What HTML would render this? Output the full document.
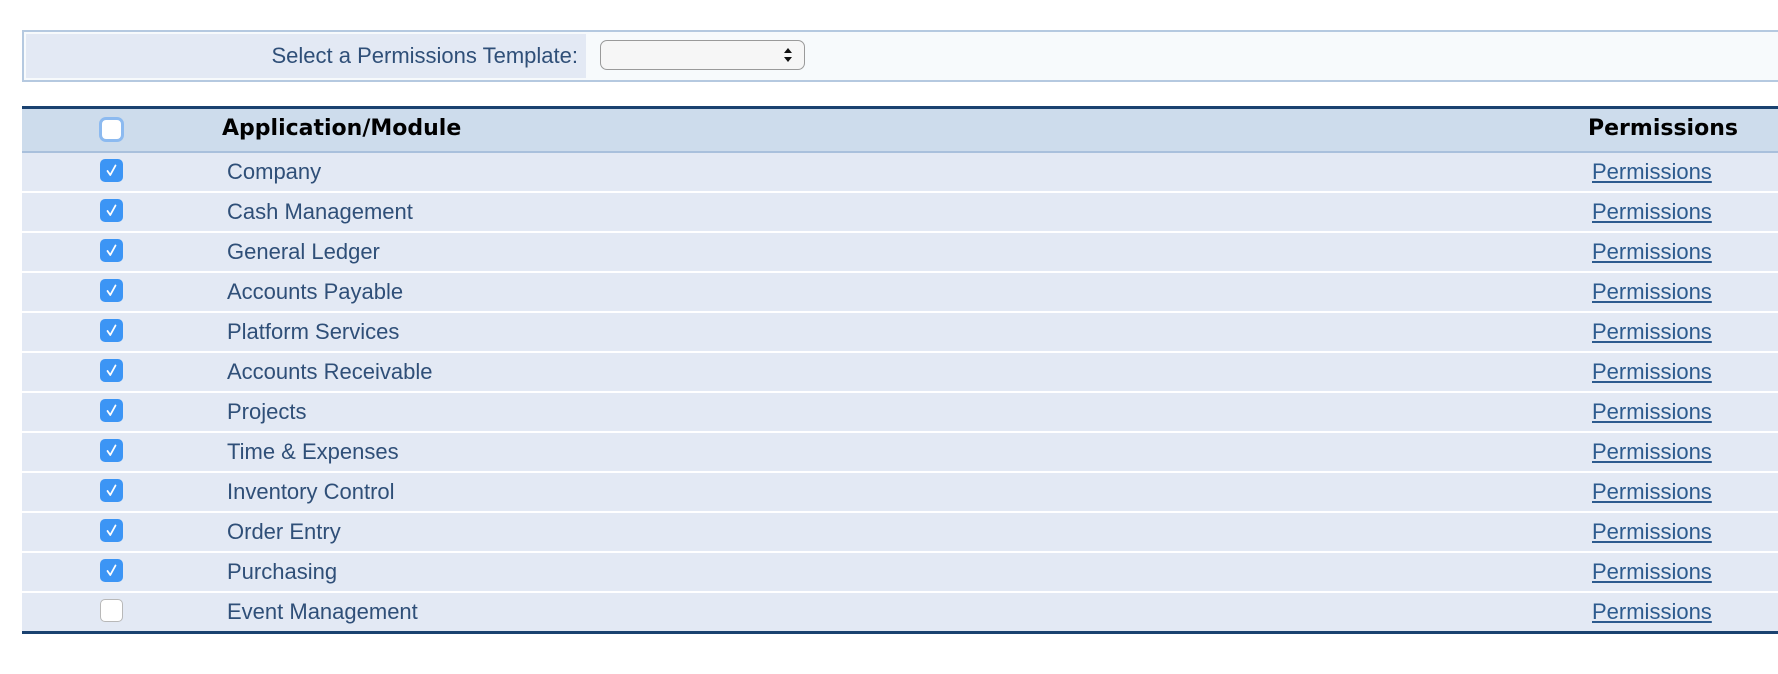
<!DOCTYPE html>
<html><head><meta charset="utf-8"><style>
body{margin:0;background:#fff;width:1778px;height:674px;overflow:hidden;font-family:"Liberation Sans",Helvetica,Arial,sans-serif;}
.top{position:absolute;left:22px;top:30px;width:1770px;height:48px;border:2px solid #b5c9e0;background:#f7fafc;}
.lab{position:absolute;left:2px;top:2px;width:560px;height:44px;background:#e3e9f4;color:#2f4f78;font-size:22px;text-align:right;line-height:44px;padding-right:8px;box-sizing:border-box;}
.sel{position:absolute;left:576px;top:8px;width:205px;height:30px;border:1.5px solid #9a9a9a;border-radius:7px;background:#f6f6f6;box-sizing:border-box;}
.sel:after{content:"";position:absolute;right:12px;top:7px;border:4px solid transparent;border-bottom:5px solid #111;border-top:0;}
.sel:before{content:"";position:absolute;right:12px;top:16px;border:4px solid transparent;border-top:5px solid #111;border-bottom:0;}
.tbl{position:absolute;left:22px;top:106px;width:1770px;border-top:3px solid #1a4270;}
.hdr{height:42px;background:#cddcec;border-bottom:2px solid #a9c0dc;position:relative;font-family:"DejaVu Sans",Verdana,sans-serif;font-weight:bold;font-size:22px;color:#000;}
.row{height:38px;background:#e3e9f4;border-bottom:2px solid #fff;position:relative;color:#2f4f78;font-size:22px;}
.row:last-child{border-bottom:3px solid #1a4270;}
.hdr span,.row span{position:absolute;top:0;line-height:40px;}
.row span{line-height:38px;}
.n{left:205px}.hdr .n{left:200px}
.p{left:1570px}.hdr .p{left:1566px}
.row .p{color:#2c5a8e;text-decoration:underline;}
.cb{position:absolute;left:78px;top:6px;width:23px;height:23px;border-radius:5px;background:#3c95f5;box-sizing:border-box;}
.cb svg{position:absolute;left:4px;top:4px}
.cb.off{background:#fff;border:1px solid #b8b8b8;}
.cb.h{left:77px;top:8px;width:25px;height:25px;background:#fff;border:3px solid #8cbaf0;border-radius:7px;}
</style></head><body>
<div class="top"><div class="lab">Select a Permissions Template:</div><div class="sel"></div></div>
<div class="tbl">
<div class="hdr"><div class="cb h"></div><span class="n">Application/Module</span><span class="p">Permissions</span></div>
<div class="row"><div class="cb"><svg width="15" height="15" viewBox="0 0 15 15"><path d="M3.5 8 L6.3 12 L11.5 2.5" stroke="#fff" stroke-width="1.8" fill="none" stroke-linecap="round" stroke-linejoin="round"/></svg></div><span class="n">Company</span><span class="p">Permissions</span></div>
<div class="row"><div class="cb"><svg width="15" height="15" viewBox="0 0 15 15"><path d="M3.5 8 L6.3 12 L11.5 2.5" stroke="#fff" stroke-width="1.8" fill="none" stroke-linecap="round" stroke-linejoin="round"/></svg></div><span class="n">Cash Management</span><span class="p">Permissions</span></div>
<div class="row"><div class="cb"><svg width="15" height="15" viewBox="0 0 15 15"><path d="M3.5 8 L6.3 12 L11.5 2.5" stroke="#fff" stroke-width="1.8" fill="none" stroke-linecap="round" stroke-linejoin="round"/></svg></div><span class="n">General Ledger</span><span class="p">Permissions</span></div>
<div class="row"><div class="cb"><svg width="15" height="15" viewBox="0 0 15 15"><path d="M3.5 8 L6.3 12 L11.5 2.5" stroke="#fff" stroke-width="1.8" fill="none" stroke-linecap="round" stroke-linejoin="round"/></svg></div><span class="n">Accounts Payable</span><span class="p">Permissions</span></div>
<div class="row"><div class="cb"><svg width="15" height="15" viewBox="0 0 15 15"><path d="M3.5 8 L6.3 12 L11.5 2.5" stroke="#fff" stroke-width="1.8" fill="none" stroke-linecap="round" stroke-linejoin="round"/></svg></div><span class="n">Platform Services</span><span class="p">Permissions</span></div>
<div class="row"><div class="cb"><svg width="15" height="15" viewBox="0 0 15 15"><path d="M3.5 8 L6.3 12 L11.5 2.5" stroke="#fff" stroke-width="1.8" fill="none" stroke-linecap="round" stroke-linejoin="round"/></svg></div><span class="n">Accounts Receivable</span><span class="p">Permissions</span></div>
<div class="row"><div class="cb"><svg width="15" height="15" viewBox="0 0 15 15"><path d="M3.5 8 L6.3 12 L11.5 2.5" stroke="#fff" stroke-width="1.8" fill="none" stroke-linecap="round" stroke-linejoin="round"/></svg></div><span class="n">Projects</span><span class="p">Permissions</span></div>
<div class="row"><div class="cb"><svg width="15" height="15" viewBox="0 0 15 15"><path d="M3.5 8 L6.3 12 L11.5 2.5" stroke="#fff" stroke-width="1.8" fill="none" stroke-linecap="round" stroke-linejoin="round"/></svg></div><span class="n">Time &amp; Expenses</span><span class="p">Permissions</span></div>
<div class="row"><div class="cb"><svg width="15" height="15" viewBox="0 0 15 15"><path d="M3.5 8 L6.3 12 L11.5 2.5" stroke="#fff" stroke-width="1.8" fill="none" stroke-linecap="round" stroke-linejoin="round"/></svg></div><span class="n">Inventory Control</span><span class="p">Permissions</span></div>
<div class="row"><div class="cb"><svg width="15" height="15" viewBox="0 0 15 15"><path d="M3.5 8 L6.3 12 L11.5 2.5" stroke="#fff" stroke-width="1.8" fill="none" stroke-linecap="round" stroke-linejoin="round"/></svg></div><span class="n">Order Entry</span><span class="p">Permissions</span></div>
<div class="row"><div class="cb"><svg width="15" height="15" viewBox="0 0 15 15"><path d="M3.5 8 L6.3 12 L11.5 2.5" stroke="#fff" stroke-width="1.8" fill="none" stroke-linecap="round" stroke-linejoin="round"/></svg></div><span class="n">Purchasing</span><span class="p">Permissions</span></div>
<div class="row"><div class="cb off"></div><span class="n">Event Management</span><span class="p">Permissions</span></div>
</div>
</body></html>
